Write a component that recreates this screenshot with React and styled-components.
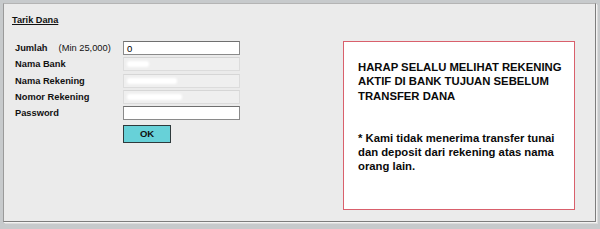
import React from "react";
import styled, { createGlobalStyle } from "styled-components";

const Global = createGlobalStyle`
  html, body { margin: 0; padding: 0; }
  body {
    background: #c7cacc;
    font-family: "Liberation Sans", Arial, sans-serif;
    width: 600px;
    height: 229px;
    overflow: hidden;
  }
`;

const Panel = styled.div`
  box-sizing: border-box;
  margin: 3px 0 0 3px;
  width: 593px;
  height: 219px;
  background: #ebebeb;
  border-top: 1px solid #b4b4b4;
  border-left: 1px solid #9a9a9a;
  border-right: 1px solid #7d7d7d;
  border-bottom: 1px solid #7d7d7d;
  box-shadow: 1px 1px 0 #f3f3f3, 2px 2px 0 #dcdcdc;
  padding: 11px 0 0 8px;
  display: flex;
  flex-direction: column;
`;

const Title = styled.div`
  font-size: 9.2px;
  font-weight: bold;
  text-decoration: underline;
  color: #111;
  line-height: 11px;
  height: 11px;
`;

const Body = styled.div`
  display: flex;
  margin-top: 15px;
  align-items: flex-start;
`;

const Form = styled.div`
  display: grid;
  grid-template-columns: 108px 117px;
  row-gap: 2.25px;
  padding-left: 3px;
  align-items: center;
`;

const Label = styled.div`
  font-size: 9.3px;
  font-weight: bold;
  color: #111;
  height: 14px;
  line-height: 14px;
  white-space: nowrap;
`;

const Hint = styled.span`
  font-weight: normal;
  margin-left: 11px;
`;

const Field = styled.div`
  box-sizing: border-box;
  height: 14px;
  width: 117px;
  display: flex;
  align-items: center;
  padding-left: 3px;
  font-size: 9.5px;
  color: #000;
  background: ${(p) => (p.$readonly ? "#efefef" : "#ffffff")};
  border: 1px solid ${(p) => (p.$readonly ? "#dcdcdc" : "#8a8a8a")};
  border-top-color: ${(p) => (p.$readonly ? "#d6d6d6" : "#6f6f6f")};
`;

const Redacted = styled.span`
  display: block;
  height: 6px;
  width: ${(p) => p.$w}px;
  background: #ffffff;
  border-radius: 2px;
  filter: blur(1px);
`;

const ButtonCell = styled.div`
  grid-column: 2;
  padding-top: 1px;
`;

const OkButton = styled.button`
  box-sizing: border-box;
  width: 48px;
  height: 18px;
  background: #67d1d8;
  border: 1px solid #2e3a3c;
  font-family: "Liberation Sans", Arial, sans-serif;
  font-size: 9.5px;
  font-weight: bold;
  color: #111;
  padding: 0;
  cursor: pointer;
`;

const Notice = styled.div`
  box-sizing: border-box;
  margin-left: 103px;
  width: 232px;
  height: 169px;
  background: #ffffff;
  border: 1px solid #d9606c;
  padding: 18px 6px 0 14px;
  font-size: 11.3px;
  font-weight: bold;
  line-height: 14.3px;
  color: #0a0a0a;
`;

const Para = styled.p`
  margin: 0;
  & + & {
    margin-top: 28px;
  }
`;

export default function App() {
  return (
    <>
      <Global />
      <Panel>
        <Title>Tarik Dana</Title>
        <Body>
          <Form>
            <Label>
              Jumlah<Hint>(Min 25,000)</Hint>
            </Label>
            <Field>0</Field>
            <Label>Nama Bank</Label>
            <Field $readonly>
              <Redacted $w={22} />
            </Field>
            <Label>Nama Rekening</Label>
            <Field $readonly>
              <Redacted $w={50} />
            </Field>
            <Label>Nomor Rekening</Label>
            <Field $readonly>
              <Redacted $w={55} />
            </Field>
            <Label>Password</Label>
            <Field />
            <ButtonCell>
              <OkButton>OK</OkButton>
            </ButtonCell>
          </Form>
          <Notice>
            <Para>HARAP SELALU MELIHAT REKENING AKTIF DI BANK TUJUAN SEBELUM TRANSFER DANA</Para>
            <Para>* Kami tidak menerima transfer tunai dan deposit dari rekening atas nama orang lain.</Para>
          </Notice>
        </Body>
      </Panel>
    </>
  );
}
